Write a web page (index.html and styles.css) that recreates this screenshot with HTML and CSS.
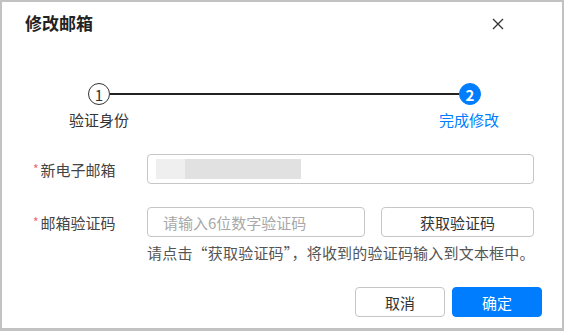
FILE: index.html
```html
<!DOCTYPE html>
<html lang="zh-CN">
<head>
  <meta charset="UTF-8">
  <title>修改邮箱</title>
  <link rel="stylesheet" href="styles.css">
</head>
<body>

  <div class="dialog">
    <div class="dialog-header">
      <h2 class="dialog-title">修改邮箱</h2>
      <button class="close-btn" type="button" aria-label="关闭">
        <svg width="12" height="12" viewBox="0 0 12 12"><path d="M1 1 L11 11 M11 1 L1 11" stroke="#333" stroke-width="1.3" fill="none"/></svg>
      </button>
    </div>

    <!-- steps -->
    <div class="steps">
      <div class="steps-track">
        <span class="step-dot">1</span>
        <span class="step-line"></span>
        <span class="step-dot active">2</span>
      </div>
      <div class="steps-labels">
        <span class="step-label">验证身份</span>
        <span class="step-label active">完成修改</span>
      </div>
    </div>

    <form class="form">
      <div class="form-row">
        <label class="form-label"><span class="req">*</span>新电子邮箱</label>
        <div class="field email-field">
          <span class="mask mask-a"></span><span class="mask mask-b"></span>
        </div>
      </div>

      <div class="form-row row-code">
        <label class="form-label"><span class="req">*</span>邮箱验证码</label>
        <input class="field code-input" type="text" placeholder="请输入6位数字验证码">
        <button class="btn code-btn" type="button">获取验证码</button>
      </div>
      <p class="hint">请点击“获取验证码”，将收到的验证码输入到文本框中。</p>
    </form>

    <div class="dialog-footer">
      <button class="btn" type="button">取消</button>
      <button class="btn btn-primary" type="button">确定</button>
    </div>
  </div>

</body>
</html>
```

FILE: styles.css
```css
* { box-sizing: border-box; }
html, body { margin: 0; padding: 0; }
body {
  background-color: #c2c2c2;
  font-family: "Noto Sans CJK SC", "Noto Sans", sans-serif;
  color: #333;
  font-size: 15px;
  padding: 2px 2px 3px;
}
.dialog {
  background-color: #fff;
  height: 326px;
  padding: 9px 20px 0 23px;
}
.dialog-header {
  display: flex; justify-content: space-between; align-items: center;
  height: 24px;
}
.dialog-title {
  margin: 0; font-size: 17px; line-height: 24px; font-weight: bold; color: #222;
}
.close-btn {
  border: none; background: none; padding: 0; margin-right: 38px; margin-top: 2px;
  width: 12px; height: 12px; display: flex; cursor: pointer;
}

.steps { margin-top: 48px; }
.steps-track {
  display: flex; align-items: center; margin: 0 61px 0 63px;
}
.step-dot {
  width: 22px; height: 22px; border-radius: 50%;
  border: 1px solid #333; color: #333;
  display: flex; align-items: center; justify-content: center;
  font-size: 15px; line-height: 1;
}
.step-dot.active {
  background-color: #007dff; border-color: #007dff; color: #fff; font-weight: bold;
}
.step-line { flex: 1; height: 2px; background-color: #222; }
.steps-labels {
  display: flex; justify-content: space-between;
  margin: 5px 43px 0 44px; line-height: 20px;
}
.step-label.active { color: #007dff; }

.form { margin-top: 24px; padding-right: 8px; }
.form-row { display: flex; align-items: center; height: 30px; }
.row-code { margin-top: 23px; gap: 16px; }
.form-label { width: 122px; flex-shrink: 0; padding-left: 8px; color: #444; }
.row-code .form-label { margin-right: -16px; }
.req { color: #f0607a; font-size: 12px; margin-right: 2px; vertical-align: 2px; }
.field {
  height: 30px; border: 1px solid #c6c6c6; border-radius: 4px;
  font-family: inherit; font-size: 15px; color: #333;
}
.email-field { flex: 1; display: flex; align-items: center; padding-left: 8px; }
.mask { display: block; height: 20px; }
.mask-a { width: 29px; background-color: #efefef; }
.mask-b { width: 116px; background-color: #e1e1e1; }
.code-input { width: 218px; padding: 0 15px; outline: none; }
.code-input::placeholder { color: #a8a8a8; }
.hint {
  margin: 6px 0 0 122px; line-height: 20px; color: #555;
  letter-spacing: 0.2px; white-space: nowrap;
}

.btn {
  height: 30px; border: 1px solid #c6c6c6; border-radius: 4px;
  background-color: #fff; color: #333; font-family: inherit; font-size: 15px;
  cursor: pointer; padding: 0;
}
.code-btn { flex: 1; }
.dialog-footer {
  display: flex; justify-content: flex-end; gap: 7px; margin-top: 24px;
}
.dialog-footer .btn { width: 90px; }
.btn-primary { background-color: #007dff; border-color: #007dff; color: #fff; }
```
